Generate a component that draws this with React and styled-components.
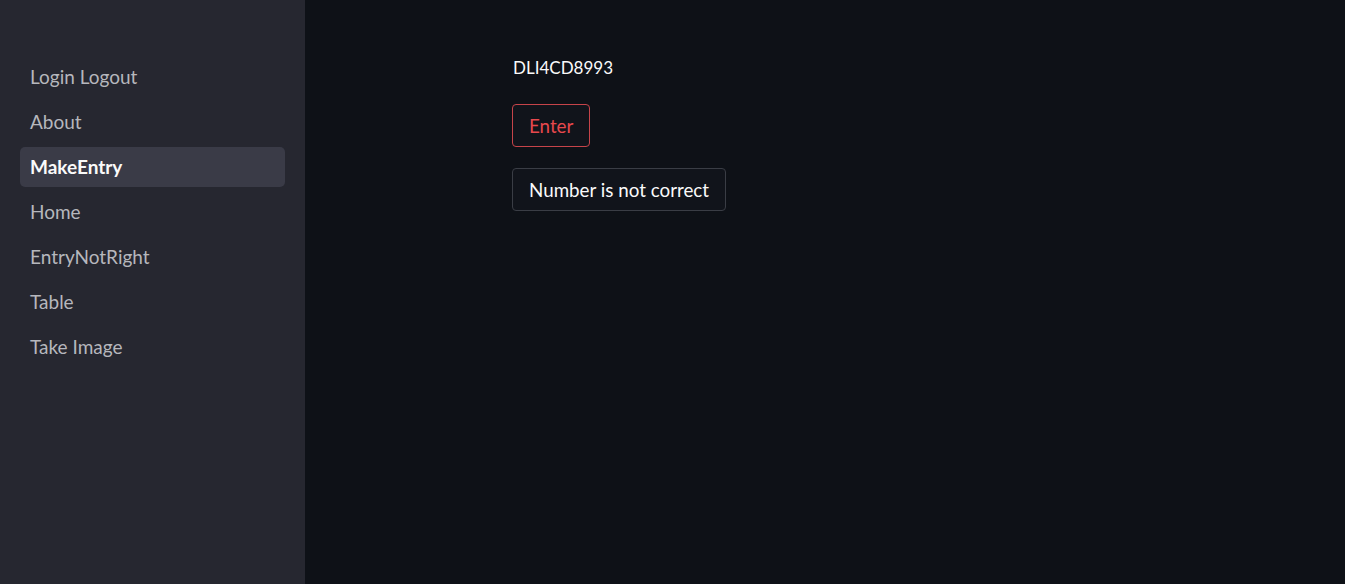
import React from "react";
import styled, { createGlobalStyle } from "styled-components";

const Global = createGlobalStyle`
  html, body { margin: 0; padding: 0; background: #0e1117; }
  body { font-family: "Lato", "Noto Sans", "Liberation Sans", sans-serif; }
  * { box-sizing: border-box; }
`;

const Layout = styled.div`
  display: flex;
  width: 100%;
  height: 584px;
  background: #0e1117;
`;

const Sidebar = styled.nav`
  width: 305px;
  flex-shrink: 0;
  background: #262730;
  padding: 57px 20px 0 20px;
  display: flex;
  flex-direction: column;
  gap: 5px;
`;

const NavItem = styled.div`
  height: 40px;
  display: flex;
  align-items: center;
  padding: 0 0 2px 10px;
  border-radius: 5px;
  font-size: 19px;
  color: ${(p) => (p.$active ? "#fafafa" : "#b6b7bd")};
  font-weight: ${(p) => (p.$active ? 700 : 400)};
  background: ${(p) => (p.$active ? "#3a3b47" : "transparent")};
`;

const Main = styled.main`
  flex: 1;
  padding: 56px 0 0 207px;
  display: flex;
  flex-direction: column;
  align-items: flex-start;
`;

const Plate = styled.div`
  color: #fafafa;
  font-size: 17px;
  line-height: 24px;
  margin-left: 1px;
  margin-bottom: 24px;
`;

const Button = styled.button`
  font-family: inherit;
  font-size: 18.8px;
  height: 43px;
  padding: 0 16px 1px 16px;
  border-radius: 4px;
  background: #11141b;
  color: ${(p) => (p.$primary ? "#e8484d" : "#fafafa")};
  border: 1px solid ${(p) => (p.$primary ? "#c6444a" : "#3a3d45")};
  margin-bottom: ${(p) => p.$mb || 0}px;
  cursor: pointer;
`;

const items = ["Login Logout", "About", "MakeEntry", "Home", "EntryNotRight", "Table", "Take Image"];

export default function App() {
  return (
    <>
      <Global />
      <Layout>
        <Sidebar>
          {items.map((t) => (
            <NavItem key={t} $active={t === "MakeEntry"}>{t}</NavItem>
          ))}
        </Sidebar>
        <Main>
          <Plate>DLI4CD8993</Plate>
          <Button $primary $mb={21}>Enter</Button>
          <Button>Number is not correct</Button>
        </Main>
      </Layout>
    </>
  );
}
